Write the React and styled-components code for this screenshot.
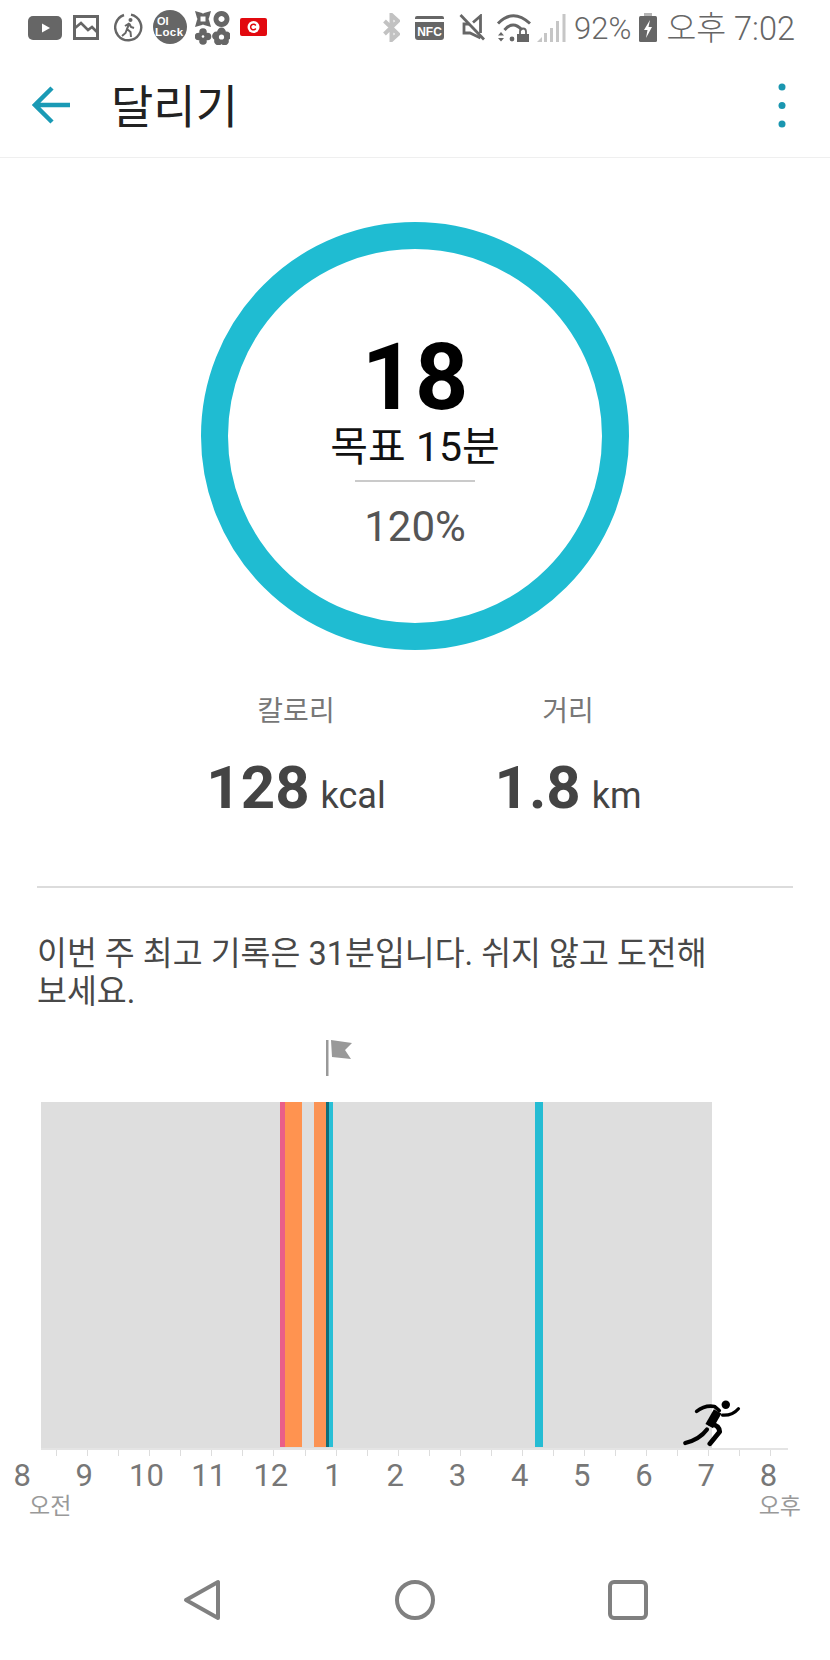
import React from 'react'
import styled, { createGlobalStyle } from 'styled-components'

const GlobalStyle = createGlobalStyle`
  html, body {
    margin: 0;
    padding: 0;
    background: #fff;
  }
  * {
    box-sizing: border-box;
  }
`

const Page = styled.div`
  width: 830px;
  height: 1660px;
  overflow: hidden;
  background: #fff;
  font-family: Roboto, 'Noto Sans CJK KR', sans-serif;
  display: flex;
  flex-direction: column;
`

const StatusBar = styled.div`
  height: 50px;
  display: flex;
  justify-content: space-between;
  padding: 0 35px 0 28px;
`
const StatusGroup = styled.div`
  display: flex;
  align-items: flex-start;
`
const StatusIcon = styled.svg`
  display: block;
  flex: none;
  margin-left: ${(p) => p.$ml || 0}px;
  margin-top: ${(p) => p.$mt || 0}px;
`
const StatusText = styled.span`
  font-size: ${(p) => p.$size || 31}px;
  line-height: 58px;
  color: #666;
  margin-left: ${(p) => p.$ml || 0}px;
  white-space: nowrap;
  font-weight: 300;
`

const Header = styled.div`
  height: 108px;
  display: flex;
  align-items: center;
  justify-content: space-between;
  padding: 3px 44px 0 32px;
  border-bottom: 1px solid #efefef;
`
const HeaderLeft = styled.div`
  display: flex;
  align-items: center;
  gap: 40px;
`
const Title = styled.h1`
  margin: 4px 0 0;
  font-size: 46px;
  font-weight: 400;
  line-height: 60px;
  color: #222;
`

const Ring = styled.div`
  width: 428px;
  height: 428px;
  margin: 64px auto 0;
  border: 27px solid #1fbcd2;
  border-radius: 50%;
  display: flex;
  flex-direction: column;
  align-items: center;
`
const RingValue = styled.div`
  margin-top: 84px;
  font-size: 93px;
  line-height: 89px;
  font-weight: 700;
  color: #000;
`
const RingGoal = styled.div`
  font-size: 41px;
  line-height: 50px;
  color: #111;
`
const RingRule = styled.div`
  width: 120px;
  height: 2px;
  margin-top: 8px;
  background: #cacaca;
`
const RingPercent = styled.div`
  margin-top: 20px;
  font-size: 42px;
  line-height: 50px;
  color: #555;
`

const Stats = styled.div`
  display: grid;
  grid-template-columns: 272px 272px;
  padding-left: 160px;
  margin-top: 42px;
`
const Stat = styled.div`
  display: flex;
  flex-direction: column;
  align-items: center;
`
const StatLabel = styled.div`
  font-size: 28px;
  line-height: 40px;
  color: #777;
`
const StatValue = styled.div`
  margin-top: 21px;
  display: flex;
  align-items: baseline;
  gap: 11px;
  color: #444;
  font-size: 60px;
  line-height: 70px;
  font-weight: 700;
`
const StatUnit = styled.span`
  font-size: 36px;
  font-weight: 400;
`

const Divider = styled.div`
  height: 2px;
  margin: 55px 37px 0;
  background: #dcdcdc;
`

const Message = styled.p`
  margin: 47px 100px 0 37px;
  font-size: 32.5px;
  line-height: 38px;
  color: #484848;
`

const FlagRow = styled.div`
  height: 37px;
  margin-top: 29px;
  padding-left: 326px;
`

const ChartArea = styled.div`
  position: relative;
  height: 346px;
  margin: 25px 0 0 41px;
  width: 671px;
  background: #dedede;
`
const Segment = styled.div`
  position: absolute;
  top: 0;
  bottom: 1px;
  background: ${(p) => p.$color};
`
const Runner = styled.svg`
  position: absolute;
  left: 641px;
  top: 295px;
`

const Axis = styled.div`
  display: grid;
  grid-template-columns: repeat(24, 31.07px);
  width: 747px;
  margin-left: 41px;
  height: 8px;
  padding-left: 15px;
  border-top: 2px solid #e4e4e4;
`
const Tick = styled.div`
  width: 1px;
  height: 6px;
  background: #ddd;
`

const HourRow = styled.div`
  display: grid;
  grid-template-columns: repeat(13, 62.2px);
  margin-left: -9px;
  margin-top: 2px;
`
const Hour = styled.div`
  text-align: center;
  font-size: 31px;
  line-height: 36px;
  color: #777;
`
const PeriodRow = styled.div`
  display: flex;
  justify-content: space-between;
  padding: 0 29px;
`
const Period = styled.span`
  font-size: 23px;
  line-height: 26px;
  color: #999;
`

const NavBar = styled.div`
  display: flex;
  align-items: center;
  margin-top: 59px;
  padding-left: 183px;
`
const NavIcon = styled.svg`
  display: block;
  flex: none;
  margin-left: ${(p) => p.$ml || 0}px;
`

const Flowers = () => (
  <StatusIcon $ml={8} $mt={11} width="35" height="34" viewBox="0 0 35 34" fill="#666">
    <path fillRule="evenodd" d="M0 0 L7 2 Q8 3 9 2 L16 0 L14 7 Q13 8 14 9 L16 16 L9 14 Q8 13 7 14 L0 16 L2 9 Q3 8 2 7 Z M5.500 5.500 V10.500 H10.500 V5.500 Z" />
    <path fillRule="evenodd" d="M26.500 0 a8 8 0 1 1 -0.010 0 Z M26.500 5 a3 3 0 1 0 0.010 0 Z" />
    <g>
      <circle cx="8" cy="21" r="3.800" />
      <circle cx="8" cy="30" r="3.800" />
      <circle cx="3.500" cy="25.500" r="3.800" />
      <circle cx="12.500" cy="25.500" r="3.800" />
      <circle cx="8" cy="25.500" r="3" />
      <circle cx="8" cy="25.500" r="1.300" fill="#fff" />
    </g>
    <g>
      <circle cx="26.500" cy="21" r="4.400" />
      <circle cx="21.500" cy="25" r="4.400" />
      <circle cx="31.500" cy="25" r="4.400" />
      <circle cx="23.500" cy="30" r="4.400" />
      <circle cx="29.500" cy="30" r="4.400" />
      <circle cx="26.500" cy="26" r="2.600" fill="#fff" />
    </g>
  </StatusIcon>
)

const segments = [
  { left: 239, width: 5, color: '#ea5f88' },
  { left: 243.5, width: 17, color: '#ff9350' },
  { left: 273, width: 11.5, color: '#fb9354' },
  { left: 284.5, width: 3, color: '#0f6c78' },
  { left: 287.5, width: 4, color: '#29bfd6' },
  { left: 493.5, width: 8, color: '#25bcd3' },
]
const hours = [8, 9, 10, 11, 12, 1, 2, 3, 4, 5, 6, 7, 8]

export default function App() {
  return (
    <Page>
      <GlobalStyle />
      <StatusBar>
        <StatusGroup>
          <StatusIcon $mt={16} width="34" height="24" viewBox="0 0 34 24">
            <rect width="34" height="24" rx="5" fill="#666" />
            <path d="M14 7.500 L22 12 L14 16.500 Z" fill="#fff" />
          </StatusIcon>
          <StatusIcon $ml={11} $mt={15} width="26" height="25" viewBox="0 0 26 25" fill="none" stroke="#666">
            <rect x="1.500" y="1.500" width="23" height="22" strokeWidth="3" />
            <path d="M2 13 L8 8 L15 15 L19 12 L25 18" strokeWidth="2.600" />
          </StatusIcon>
          <StatusIcon $ml={15} $mt={13} width="29" height="29" viewBox="0 0 29 29" fill="none" stroke="#666">
            <path d="M17 1.600 A13 13 0 1 1 10 2" strokeWidth="2.400" />
            <circle cx="16.500" cy="7" r="2" fill="#666" stroke="none" />
            <path d="M15.500 10 L13 16 L16.500 19 L17 24 M13 16 L11.500 20 L8 23 M15 10.500 L11 13 M15.500 11 L17 14 L20 15" strokeWidth="2" />
          </StatusIcon>
          <StatusIcon $ml={10} $mt={10} width="34" height="34" viewBox="0 0 34 34">
            <circle cx="17" cy="17" r="17" fill="#666" />
            <text x="4" y="15" fontFamily="Liberation Sans, sans-serif" fontWeight="700" fontSize="11" fill="#fff">OI</text>
            <text x="2" y="26" fontFamily="Liberation Sans, sans-serif" fontWeight="700" fontSize="11.500" letterSpacing="0.400" fill="#fff">Lock</text>
          </StatusIcon>
          <Flowers />
          <StatusIcon $ml={10} $mt={18} width="27" height="18" viewBox="0 0 27 18">
            <rect width="27" height="18" rx="2" fill="#e2090f" />
            <circle cx="13.500" cy="9" r="6" fill="#fff" />
            <path d="M15.800 7.500 A2.800 2.800 0 1 0 15.800 10.500" fill="none" stroke="#e2090f" strokeWidth="1.500" />
          </StatusIcon>
        </StatusGroup>
        <StatusGroup>
          <StatusIcon $mt={13} width="17" height="29" viewBox="0 0 17 29" fill="none" stroke="#c2c2c2" strokeWidth="4">
            <path d="M1.500 8 L15 21 L8.500 27 L8.500 2 L15 8 L1.500 21" />
          </StatusIcon>
          <StatusIcon $ml={15} $mt={16} width="29" height="24" viewBox="0 0 29 24">
            <path d="M2 0 H27 Q29 0 29 2 V3 H0 V2 Q0 0 2 0 Z" fill="#666" />
            <path d="M0 6 H29 V21 Q29 24 26 24 H3 Q0 24 0 21 Z" fill="#666" />
            <text x="14.500" y="20" textAnchor="middle" fontFamily="Liberation Sans, sans-serif" fontWeight="700" fontSize="12" fill="#fff">NFC</text>
          </StatusIcon>
          <StatusIcon $ml={14} $mt={14} width="27" height="27" viewBox="0 0 27 27" fill="none" stroke="#666" strokeWidth="2.800">
            <path d="M2.500 1 L26 25.500" />
            <path d="M11 10 H6 V19 H12 L22.500 24 M22.500 19 V2 L15 8.500" />
          </StatusIcon>
          <StatusIcon $ml={11} $mt={14} width="35" height="28" viewBox="0 0 35 28" fill="none" stroke="#666">
            <path d="M2 9.500 Q17 -6 34 9.500" strokeWidth="3" />
            <path d="M8.500 16 Q17 6 26 16" strokeWidth="3" />
            <circle cx="16" cy="25" r="2.400" fill="#666" stroke="none" />
            <path d="M2 21.500 L5 18 L8 21.500 Z M2 24 L8 24 L5 27.500 Z" fill="#666" stroke="none" />
            <rect x="21" y="20" width="12" height="8" fill="#666" stroke="none" />
            <path d="M24 20 V17.500 A3 3 0 0 1 30 17.500 V20" strokeWidth="1.800" />
          </StatusIcon>
          <StatusIcon $ml={6} $mt={14} width="29" height="28" viewBox="0 0 29 28" fill="#c6c6c6">
            <path d="M0 28 L5 23 V28 Z" />
            <rect x="7" y="19" width="3" height="9" />
            <rect x="13" y="14" width="3" height="14" />
            <rect x="19" y="7" width="3" height="21" />
            <rect x="25.500" y="0" width="3" height="28" />
          </StatusIcon>
          <StatusText $ml={8}>92%</StatusText>
          <StatusIcon $ml={8} $mt={13} width="18" height="29" viewBox="0 0 18 29">
            <rect x="5" y="0" width="8" height="4" fill="#b5b5b5" />
            <rect x="0" y="3" width="18" height="26" rx="1.500" fill="#666" />
            <path d="M11 7 L5 17 H8.500 L7 25 L13 14 H9.500 Z" fill="#fff" />
          </StatusIcon>
          <StatusText $ml={9} $size={32.5}>오후 7:02</StatusText>
        </StatusGroup>
      </StatusBar>

      <Header>
        <HeaderLeft>
          <svg width="39" height="38" viewBox="0 0 39 38" fill="none" stroke="#1a9ab5" strokeWidth="4.500">
            <path d="M38 19 H4 M20 2 L3 19 L20 36" />
          </svg>
          <Title>달리기</Title>
        </HeaderLeft>
        <svg width="8" height="45" viewBox="0 0 8 45" fill="#1a96b0">
          <circle cx="4" cy="4" r="3.500" />
          <circle cx="4" cy="22.500" r="3.500" />
          <circle cx="4" cy="41" r="3.500" />
        </svg>
      </Header>

      <Ring>
        <RingValue>18</RingValue>
        <RingGoal>목표 15분</RingGoal>
        <RingRule />
        <RingPercent>120%</RingPercent>
      </Ring>

      <Stats>
        <Stat>
          <StatLabel>칼로리</StatLabel>
          <StatValue>128<StatUnit>kcal</StatUnit></StatValue>
        </Stat>
        <Stat>
          <StatLabel>거리</StatLabel>
          <StatValue>1.8<StatUnit>km</StatUnit></StatValue>
        </Stat>
      </Stats>

      <Divider />

      <Message>이번 주 최고 기록은 31분입니다. 쉬지 않고 도전해 보세요.</Message>

      <FlagRow>
        <svg width="26" height="37" viewBox="0 0 26 37" fill="#999">
          <rect x="0" y="0" width="2.500" height="36" />
          <path d="M5 0 L26 3 L19 10 L25 19 L6 17 Z" />
        </svg>
      </FlagRow>

      <ChartArea>
        {segments.map((s) => (
          <Segment key={s.left} $color={s.color} style={{ left: s.left, width: s.width }} />
        ))}
        <Runner width="60" height="50" viewBox="800 20 185 150" fill="none" stroke="#000" strokeLinecap="round" strokeLinejoin="round">
          <circle cx="935" cy="42" r="13" fill="#000" stroke="none" />
          <path d="M845 62 Q870 42 900 47 L915 60" strokeWidth="11" />
          <path d="M910 62 L884 108" strokeWidth="27" strokeLinecap="butt" />
          <path d="M925 74 Q955 76 974 54" strokeWidth="10" />
          <path d="M888 100 Q915 105 916 125 L886 162" strokeWidth="15" />
          <path d="M877 118 Q855 148 810 160" strokeWidth="13" />
        </Runner>
      </ChartArea>

      <Axis>
        {Array.from({ length: 24 }, (_, i) => <Tick key={i} />)}
      </Axis>

      <HourRow>
        {hours.map((h, i) => <Hour key={i}>{h}</Hour>)}
      </HourRow>

      <PeriodRow>
        <Period>오전</Period>
        <Period>오후</Period>
      </PeriodRow>

      <NavBar>
        <NavIcon width="38" height="42" viewBox="0 0 38 42" fill="none" stroke="#808080" strokeWidth="4" strokeLinejoin="round">
          <path d="M3 21 L35 3 V39 Z" />
        </NavIcon>
        <NavIcon $ml={174} width="40" height="42" viewBox="0 0 40 42" fill="none" stroke="#808080" strokeWidth="4">
          <circle cx="20" cy="21" r="18" />
        </NavIcon>
        <NavIcon $ml={173} width="40" height="42" viewBox="0 0 40 42" fill="none" stroke="#808080" strokeWidth="4">
          <rect x="2" y="3" width="36" height="36" rx="4" />
        </NavIcon>
      </NavBar>
    </Page>
  )
}
